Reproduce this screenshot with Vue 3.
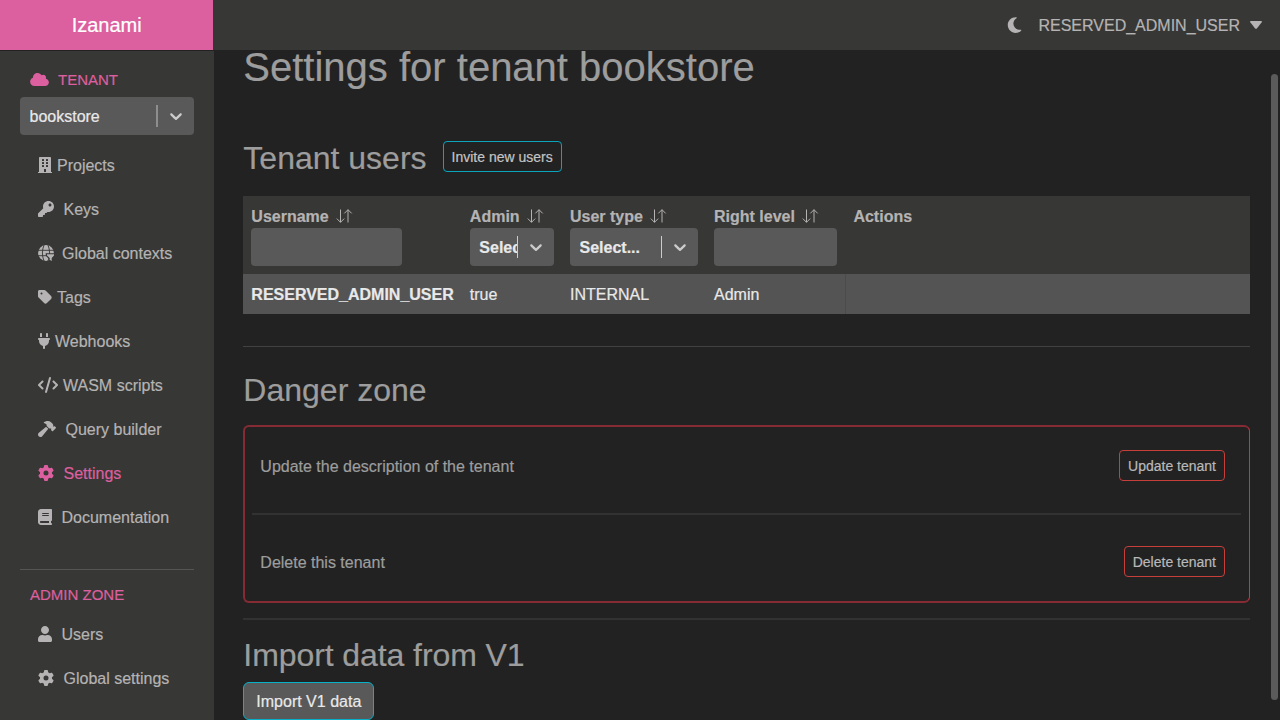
<script setup>
const gear = 'M495.9 166.6c3.2 8.7 .5 18.4-6.4 24.6l-43.3 39.4c1.1 8.3 1.7 16.8 1.7 25.4s-.6 17.1-1.7 25.4l43.3 39.4c6.9 6.2 9.6 15.9 6.4 24.6c-4.4 11.9-9.7 23.3-15.8 34.3l-4.7 8.1c-6.6 11-14 21.4-22.1 31.2c-5.9 7.2-15.7 9.6-24.5 6.8l-55.7-17.7c-13.4 10.3-28.2 18.9-44 25.4l-12.5 57.1c-2 9.1-9 16.3-18.2 17.8c-13.8 2.3-28 3.5-42.5 3.5s-28.7-1.2-42.5-3.5c-9.2-1.5-16.2-8.7-18.2-17.8l-12.5-57.1c-15.8-6.5-30.6-15.1-44-25.4L83.1 425.9c-8.8 2.8-18.6 .3-24.5-6.8c-8.1-9.8-15.5-20.2-22.1-31.2l-4.7-8.1c-6.1-11-11.4-22.4-15.8-34.3c-3.2-8.7-.5-18.4 6.4-24.6l43.3-39.4C64.6 273.1 64 264.6 64 256s.6-17.1 1.7-25.4L22.4 191.2c-6.9-6.2-9.6-15.9-6.4-24.6c4.4-11.9 9.7-23.3 15.8-34.3l4.7-8.1c6.6-11 14-21.4 22.1-31.2c5.9-7.2 15.7-9.6 24.5-6.8l55.7 17.7c13.4-10.3 28.2-18.9 44-25.4l12.5-57.1c2-9.1 9-16.3 18.2-17.8C227.3 1.2 241.5 0 256 0s28.7 1.2 42.5 3.5c9.2 1.5 16.2 8.7 18.2 17.8l12.5 57.1c15.8 6.5 30.6 15.1 44 25.4l55.7-17.7c8.8-2.8 18.6-.3 24.5 6.8c8.1 9.8 15.5 20.2 22.1 31.2l4.7 8.1c6.1 11 11.4 22.4 15.8 34.3zM256 336a80 80 0 1 0 0-160 80 80 0 1 0 0 160z'

const pane = (x, y) => `M${x} ${y}h40a12 12 0 0 1 12 12v40a12 12 0 0 1-12 12h-40a12 12 0 0 1-12-12v-40a12 12 0 0 1 12-12z`
const building = 'M436 480h-20V24c0-13.3-10.7-24-24-24H56C42.7 0 32 10.7 32 24v456H12c-6.600 0-12 5.400-12 12v20h448v-20c0-6.600-5.400-12-12-12z'
  + [64, 160, 256].map(y => pane(140, y) + pane(268, y)).join('')
  + 'M192 480v-84c0-6.600 5.400-12 12-12h40c6.600 0 12 5.400 12 12v84z'

const items = [
  { label: 'Projects', w: 448, gap: 'g5', d: building },
  { label: 'Keys', w: 512, gap: 'g9', d: 'M512 176C512 273.200 433.200 352 336 352c-11.200 0-22.200-1.060-32.800-3.070l-24 27A24 24 0 0 1 261.200 384H224v40c0 13.300-10.700 24-24 24h-40v40c0 13.300-10.700 24-24 24H24c-13.300 0-24-10.700-24-24v-78c0-6.400 2.500-12.500 7-17l161.800-161.800C163.100 213.800 160 195.300 160 176 160 78.800 238.800 0 336 0 433.500 0 512 78.500 512 176zM336 128c0 26.500 21.500 48 48 48s48-21.500 48-48-21.500-48-48-48-48 21.500-48 48z' },
  { label: 'Global contexts', w: 512, gap: 'g8', globe: true },
  { label: 'Tags', w: 448, gap: 'g5', d: 'M0 80V229.5c0 17 6.7 33.3 18.7 45.3l176 176c25 25 65.5 25 90.5 0L418.7 317.3c25-25 25-65.5 0-90.5l-176-176c-12-12-28.3-18.700-45.300-18.700H48C21.5 32 0 53.5 0 80zm112 32a32 32 0 1 1 0 64 32 32 0 1 1 0-64z' },
  { label: 'Webhooks', w: 384, gap: 'g5', d: 'M96 0C78.3 0 64 14.3 64 32v96h64V32c0-17.7-14.3-32-32-32zM288 0c-17.7 0-32 14.3-32 32v96h64V32c0-17.7-14.3-32-32-32zM32 160c-17.7 0-32 14.3-32 32s14.3 32 32 32v32c0 77.4 55 142 128 156.8V480c0 17.7 14.3 32 32 32s32-14.3 32-32V412.8C297 398 352 333.4 352 256V224c17.7 0 32-14.3 32-32s-14.3-32-32-32H32z' },
  { label: 'WASM scripts', w: 640, gap: 'g5', d: 'M392.8 1.2c-17-4.9-34.7 5-39.6 22l-128 448c-4.9 17 5 34.7 22 39.6s34.7-5 39.6-22l128-448c4.9-17-5-34.7-22-39.6zm80.6 120.1c-12.5 12.5-12.5 32.8 0 45.3L562.7 256l-89.4 89.4c-12.5 12.5-12.5 32.8 0 45.3s32.8 12.5 45.3 0l112-112c12.5-12.5 12.5-32.8 0-45.3l-112-112c-12.5-12.5-32.8-12.5-45.3 0zm-306.700 0c-12.5-12.5-32.8-12.5-45.3 0l-112 112c-12.5 12.5-12.5 32.8 0 45.3l112 112c12.5 12.5 32.8 12.5 45.3 0s12.5-32.8 0-45.3L77.3 256l89.4-89.4c12.5-12.5 12.5-32.8 0-45.3z' },
  { label: 'Query builder', w: 576, gap: 'g9', d: 'M413.5 237.5c-28.2 4.8-58.2-3.6-80-25.4l-38.1-38.1C280.4 159 272 138.8 272 117.6V105.5L192.3 62c-5.3-2.9-8.6-8.6-8.3-14.7s3.9-11.5 9.5-14l47.2-21C259.1 4.2 279 0 299.2 0h18.1c36.7 0 72 14 98.700 39.1l44.6 42c24.2 22.8 33.2 55.7 26.6 86L503 183l8-8c9.4-9.4 24.6-9.4 33.9 0l24 24c9.4 9.4 9.4 24.6 0 33.9l-88 88c-9.4 9.4-24.6 9.4-33.9 0l-24-24c-9.4-9.4-9.4-24.6 0-33.9l8-8-17.5-17.5zM27.4 377.1L260.9 182.6c3.5 4.9 7.5 9.6 11.8 14l38.1 38.1c6 6 12.4 11.2 19.2 15.7L134.9 484.6c-14.5 17.4-36 27.4-58.6 27.4C34.1 512 0 477.8 0 435.7c0-22.6 10.1-44.1 27.4-58.6z' },
  { label: 'Settings', w: 512, gap: 'g9', d: gear, active: true },
  { label: 'Documentation', w: 448, gap: 'g9', d: 'M96 0C43 0 0 43 0 96V416c0 53 43 96 96 96H384h32c17.7 0 32-14.3 32-32s-14.3-32-32-32V384c17.7 0 32-14.3 32-32V32c0-17.7-14.3-32-32-32H384 96zm0 384H352v64H96c-17.7 0-32-14.3-32-32s14.3-32 32-32zm32-240c0-8.8 7.2-16 16-16H336c8.8 0 16 7.2 16 16s-7.2 16-16 16H144c-8.800 0-16-7.2-16-16zm16 48H336c8.8 0 16 7.2 16 16s-7.2 16-16 16H144c-8.8 0-16-7.2-16-16s7.2-16 16-16z' },
]
const adminItems = [
  { label: 'Users', w: 448, gap: 'g9', d: 'M224 256c70.7 0 128-57.3 128-128S294.7 0 224 0 96 57.3 96 128s57.3 128 128 128zm89.6 32h-16.7c-22.2 10.2-46.9 16-72.9 16s-50.6-5.8-72.9-16h-16.7C60.2 288 0 348.2 0 422.4V464c0 26.5 21.5 48 48 48h352c26.5 0 48-21.5 48-48v-41.6c0-74.2-60.2-134.400-134.400-134.400z' },
  { label: 'Global settings', w: 512, gap: 'g9', d: gear },
]
const columns = [
  { label: 'Username', filter: 'input' },
  { label: 'Admin', filter: 'select' },
  { label: 'User type', filter: 'select' },
  { label: 'Right level', filter: 'input' },
]
const chevron = 'M4.516 7.548c0.436-0.446 1.043-0.481 1.576 0l3.908 3.747 3.908-3.747c0.533-0.481 1.141-0.446 1.574 0 0.436 0.445 0.408 1.197 0 1.615-0.406 0.418-4.695 4.502-4.695 4.502-0.217 0.223-0.502 0.335-0.787 0.335s-0.570-0.112-0.789-0.335c0 0-4.287-4.084-4.695-4.502s-0.436-1.170 0-1.615z'
</script>

<template>
  <div class="app">
    <header class="topbar">
      <div class="brand">Izanami</div>
      <div class="account">
        <svg class="moon" viewBox="0 0 384 512"><path d="M223.5 32C100 32 0 132.3 0 256S100 480 223.5 480c60.6 0 115.5-24.2 155.8-63.4c5-4.9 6.3-12.5 3.1-18.7s-10.1-9.7-17-8.5c-9.8 1.7-19.8 2.6-30.1 2.6c-96.9 0-175.5-78.8-175.5-176c0-65.8 36-123.1 89.300-153.300c6.1-3.5 9.2-10.5 7.7-17.3s-7.3-11.9-14.3-12.5c-6.3-.5-12.6-.8-19-.8z" /></svg>
        <span class="low">RESERVED_ADMIN_USER</span>
        <svg class="caret" viewBox="0 0 12 8"><path d="M.8 0h10.400q1.200.2.500 1.300L6.900 7.400q-.9.900-1.800 0L.3 1.300Q-.4.200.8 0z" /></svg>
      </div>
    </header>

    <div class="body">
      <nav class="sidebar">
        <div class="section tenant">
          <svg class="cloud" viewBox="0 0 640 512"><path d="M0 336c0 79.5 64.5 144 144 144H512c70.7 0 128-57.3 128-128c0-61.9-44-113.6-102.4-125.4c4.1-10.7 6.4-22.4 6.4-34.6c0-53-43-96-96-96c-19.7 0-38.1 6-53.300 16.200C367 64.2 315.3 32 256 32C167.6 32 96 103.6 96 192c0 2.7 .1 5.4 .2 8.1C40.2 219.8 0 273.2 0 336z" /></svg>
          <span class="low">TENANT</span>
        </div>
        <div class="select">
          <span class="value low">bookstore</span>
          <i class="sep dim"></i>
          <svg class="chev" viewBox="0 0 20 20"><path :d="chevron" /></svg>
        </div>
        <ul class="menu">
          <li v-for="it in items" :key="it.label" :class="[it.gap, { active: it.active }]">
            <svg v-if="it.globe" class="icon w512" viewBox="0 0 16 16">
              <circle cx="8" cy="8" r="7.900" />
              <path class="lines" d="M0 5.300h16M0 10.700h16M6 0Q2.800 8 6 16M10 0q3.200 8 0 16" />
              <path class="knock" d="M7.600 8.300H16.500V16.500H11.200v-2.300L8 11.100z" />
              <path d="M9 9.200h7v1.300l-2.300 2.600v3l-2-1.300v-1.700L9 10.500z" />
            </svg>
            <svg v-else class="icon" :class="'w' + it.w" :viewBox="`0 0 ${it.w} 512`"><path fill-rule="evenodd" :d="it.d" /></svg>
            <span class="low">{{ it.label }}</span>
          </li>
        </ul>
        <div class="rule"></div>
        <div class="section admin">ADMIN ZONE</div>
        <ul class="menu second">
          <li v-for="it in adminItems" :key="it.label" :class="it.gap">
            <svg class="icon" :class="'w' + it.w" :viewBox="`0 0 ${it.w} 512`"><path fill-rule="evenodd" :d="it.d" /></svg>
            <span class="low">{{ it.label }}</span>
          </li>
        </ul>
      </nav>

      <main class="main">
        <h1>Settings for tenant bookstore</h1>
        <div class="titlerow">
          <h2 class="low">Tenant users</h2>
          <button class="btn small cyan">Invite new users</button>
        </div>

        <div class="table">
          <div class="tr head">
            <div v-for="c in columns" :key="c.label" class="td">
              <div class="label">
                <span class="low">{{ c.label }}</span>
                <svg class="sort" viewBox="0 0 17 16"><path d="M4.500 1.500v12.800M.8 10.600l3.700 3.700 3.700-3.700M12 14.500V1.700M8.300 5.400 12 1.700l3.700 3.700" /></svg>
              </div>
              <div v-if="c.filter === 'input'" class="input"></div>
              <div v-else class="select">
                <span class="value low">Select...</span>
                <i class="sep"></i>
                <svg class="chev" viewBox="0 0 20 20"><path :d="chevron" /></svg>
              </div>
            </div>
            <div class="td"><div class="label"><span class="low">Actions</span></div></div>
          </div>
          <div class="tr row">
            <div class="td strong">RESERVED_ADMIN_USER</div>
            <div class="td">true</div>
            <div class="td">INTERNAL</div>
            <div class="td">Admin</div>
            <div class="td last"></div>
          </div>
        </div>

        <div class="hr thin"></div>
        <h2 class="danger-title">Danger zone</h2>
        <section class="danger">
          <div class="action">
            <span>Update the description of the tenant</span>
            <button class="btn small red">Update tenant</button>
          </div>
          <div class="hr inner"></div>
          <div class="action">
            <span>Delete this tenant</span>
            <button class="btn small red">Delete tenant</button>
          </div>
        </section>
        <div class="hr after"></div>
        <h2 class="import-title">Import data from V1</h2>
        <button class="btn filled">Import V1 data</button>
      </main>
    </div>
    <div class="scrollbar"></div>
  </div>
</template>

<style>
html, body { margin: 0; background: #222222; }
</style>

<style scoped>
.app {
  position: relative;
  width: 1280px;
  height: 720px;
  overflow: hidden;
  display: flex;
  flex-direction: column;
  background: #222222;
  color: #b5b3b3;
  font: 16px/24px "Liberation Sans", Arial, sans-serif;
  -webkit-text-stroke: 0.2px currentColor;
}
* { box-sizing: border-box; }
svg { display: block; flex: none; fill: currentColor; }
h1, h2 { margin: 0; font-weight: 400; color: #9d9d9d; }
h1 { font-size: 40px; line-height: 48px; }
h2 { font-size: 32px; line-height: 38px; }
.low { padding-top: 2px; }

.topbar { display: flex; height: 50px; flex: none; background: #373735; }
.brand {
  width: 213.33px;
  background: #dc5f9f;
  color: #fff;
  font-size: 20px;
  line-height: 50px;
  text-align: center;
}
.account { margin-left: auto; display: flex; align-items: center; padding-right: 18px; }
.account .low { display: block; }
.moon { width: 15px; height: 18px; margin-right: 16px; }
.caret { width: 12px; height: 8px; margin-left: 10px; }

.body { display: flex; flex: 1; min-height: 0; }
.sidebar {
  width: 214px;
  flex: none;
  margin-top: 1px;
  padding: 16px 20px 0;
  background: #373735;
}
.section { display: flex; align-items: center; height: 24px; padding-left: 10px; color: #dc5f9f; font-size: 15px; }
.cloud { width: 19px; height: 15px; margin-right: 9px; }
.tenant { margin-bottom: 6px; }

.select {
  display: flex;
  align-items: center;
  height: 38px;
  padding-left: 9.500px;
  border-radius: 4px;
  background: #595959;
  color: #e9e9e9;
}
.value { flex: 1; min-width: 0; overflow: hidden; white-space: nowrap; }
.sep { width: 1px; height: 22px; background: #ccc; flex: none; }
.sep.dim { width: 2px; background: #8e8e8e; }
.chev { width: 20px; height: 20px; margin: 0 8px; color: #ccc; }
.sidebar .chev { margin: 0 8.500px 0 7.500px; }

.menu { list-style: none; margin: 8px 0 0; padding: 0 0 0 18px; }
.menu li { display: flex; align-items: center; height: 44px; white-space: nowrap; }
.menu li.active { color: #dc5f9f; }
.g5 { gap: 5px; }
.g8 { gap: 8px; }
.g9 { gap: 9.500px; }
.icon { height: 16px; }
.w384 { width: 12px; }
.w448 { width: 14px; }
.w512 { width: 16px; }
.w576 { width: 18px; }
.w640 { width: 20px; }
.knock { fill: #373735; }
.lines { fill: none; stroke: #373735; stroke-width: 0.9; }
.rule { height: 1px; margin-top: 30px; background: #555; }
.admin { margin-top: 13px; }
.menu.second { margin-top: 5px; }

.main { flex: 1; padding: 0 30px 0 29.33px; overflow: hidden; }
.main h1 { margin-top: -7px; }
.titlerow { display: flex; align-items: center; height: 31px; margin: 50px 0 24px; gap: 16px; }

.btn {
  display: block;
  margin: 0;
  border: 1px solid;
  background: transparent;
  color: #b5b3b3;
  font-family: inherit;
  white-space: nowrap;
}
.small { height: 31px; padding: 1px 8px 0; border-radius: 4px; font-size: 14px; line-height: 28px; }
.cyan { border-color: #0aa5ba; color: #c4c4c4; }
.red { border-color: #c63f3b; color: #b9b9b9; }
.filled {
  height: 38px;
  margin-top: 8px;
  padding: 2px 12px 0;
  border-color: #06b0c8;
  border-radius: 6px;
  background: #595959;
  color: #e9e9e9;
  font-size: 16px;
  line-height: 34px;
}

.tr { display: grid; grid-template-columns: 218.500px 100.200px 144px 139.400px 1fr; }
.head { height: 78px; background: #373735; font-weight: 700; }
.head .td { padding: 8px; }
.label { display: flex; height: 24px; align-items: center; white-space: nowrap; }
.sort { width: 17px; height: 16px; margin-left: 7.500px; fill: none; stroke: currentColor; stroke-width: 1; }
.input { height: 38px; border-radius: 4px; background: #595959; }
.head .td:first-child .input { width: 150.500px; }
.row { height: 40px; background: #545454; color: #e9e9e9; }
.row .td { padding: 9px 8px 7px; }
.row .last { border-left: 1px solid #4b4b4b; }
.strong { font-weight: 700; white-space: nowrap; }

.hr { height: 2px; background: #323232; }
.hr.thin { height: 1px; margin-top: 32px; background: #424242; }
.danger-title { margin-top: 24px; }
.danger {
  height: 178px;
  margin-top: 16px;
  padding: 0 7px;
  border: solid #862b34;
  border-width: 2px 1px 2px 2px;
  border-right-color: #cb3444;
  border-radius: 6px;
}
.action { display: flex; justify-content: space-between; height: 86px; padding: 23px 17px 0 8px; color: #9d9d9d; }
.action span { line-height: 33px; }
.inner + .action { padding-top: 31px; }
.hr.inner { margin-right: 1px; }
.hr.after { margin-top: 15px; }
.import-title { margin-top: 16px; letter-spacing: -0.08px; }

.scrollbar {
  position: absolute;
  left: 1271px;
  top: 74px;
  width: 7px;
  height: 626px;
  border-radius: 4px;
  background: #5b5b5b;
}
</style>
